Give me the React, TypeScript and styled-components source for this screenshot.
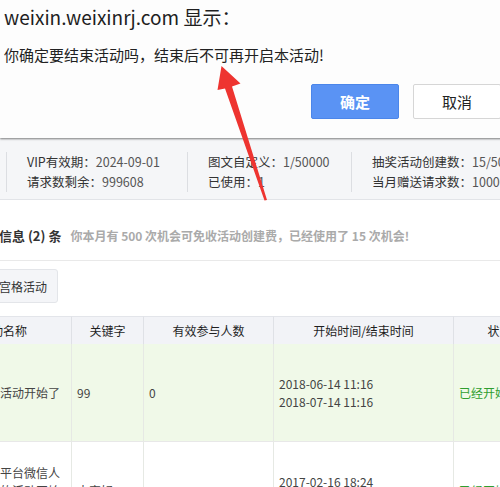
import React from 'react';
import styled, { createGlobalStyle } from 'styled-components';

const GlobalStyle = createGlobalStyle`
  html, body {
    margin: 0;
    padding: 0;
    background: #fff;
  }
  body {
    font-family: 'Noto Sans CJK SC', 'Noto Sans', sans-serif;
    color: #333;
    overflow: hidden;
  }
`;

const Screen = styled.div`
  position: relative;
  width: 500px;
  height: 487px;
  overflow: hidden;
  background: #fff;
`;

/* browser alert sheet */
const Alert = styled.div`
  position: relative;
  z-index: 2;
  width: 525px;
  height: 138px;
  box-sizing: border-box;
  padding: 3px 24px 0 4px;
  background: #fdfdfd;
  box-shadow: 0 1px 2px rgba(0, 0, 0, 0.5);
`;

const AlertTitle = styled.div`
  font-size: 19px;
  line-height: 28px;
  color: #1f1f1f;
  white-space: nowrap;
`;

const AlertMessage = styled.div`
  margin-top: 13px;
  font-size: 15px;
  line-height: 22px;
  color: #222;
  white-space: nowrap;
`;

const AlertActions = styled.div`
  display: flex;
  justify-content: flex-end;
  gap: 14px;
  margin-top: 18px;
`;

const AlertButton = styled.button<{ $primary?: boolean }>`
  width: 88px;
  height: 35px;
  box-sizing: border-box;
  border-radius: 2px;
  font-family: inherit;
  font-size: 15px;
  font-weight: ${({ $primary }) => ($primary ? 700 : 400)};
  color: ${({ $primary }) => ($primary ? '#fff' : '#222')};
  background: ${({ $primary }) => ($primary ? '#5a93f4' : '#fff')};
  border: 1px solid ${({ $primary }) => ($primary ? '#4b86ea' : '#d6d6d6')};
`;

const Content = styled.div`
  margin-left: -65px;
  width: 610px;
`;

const StatsBar = styled.div`
  display: flex;
  height: 62px;
  box-sizing: border-box;
  padding: 14px 0 7px;
  background: #f5f6f8;
  border-bottom: 1px solid #e2e4e8;
`;

const StatItem = styled.div<{ $width?: number }>`
  flex: ${({ $width }) => ($width ? `0 0 ${$width}px` : '1 1 auto')};
  box-sizing: border-box;
  padding-left: 20px;
  border-right: ${({ $width }) => ($width ? '1px solid #dcdee2' : 'none')};
  font-size: 12.5px;
  line-height: 20px;
  white-space: nowrap;
  overflow: hidden;
`;

const StatLabel = styled.span`
  color: #333;
`;

const StatValue = styled.span`
  color: #555;
`;

const SectionHead = styled.div`
  padding: 24px 0 14px 38px;
  border-bottom: 1px solid #e9e9e9;
  line-height: 20px;
  white-space: nowrap;
`;

const SectionTitle = styled.span`
  font-size: 13px;
  font-weight: 700;
  color: #333;
`;

const SectionNote = styled.span`
  margin-left: 9px;
  font-size: 12px;
  font-weight: 700;
  color: #aaa;
`;

const Toolbar = styled.div`
  display: flex;
  padding: 8px 0 13px 41px;
`;

const ToolButton = styled.div`
  height: 34px;
  box-sizing: border-box;
  padding: 0 10px;
  display: flex;
  align-items: center;
  font-size: 12px;
  color: #333;
  background: #f4f5f8;
  border: 1px solid #e3e5e9;
  border-radius: 3px;
`;

const Table = styled.div`
  display: grid;
  grid-template-columns: 136px 72px 130px 180px 92px;
`;

const HeadCell = styled.div<{ $first?: boolean }>`
  height: 28px;
  box-sizing: border-box;
  display: flex;
  align-items: center;
  justify-content: center;
  font-size: 12px;
  color: #1f1f1f;
  background: #f2f3f7;
  border-top: 1px solid #e3e5ea;
  border-left: ${({ $first }) => ($first ? 'none' : '1px solid #dfe1e6')};
  white-space: nowrap;
`;

const Cell = styled.div<{ $first?: boolean; $active?: boolean; $status?: boolean }>`
  min-height: 98px;
  box-sizing: border-box;
  display: flex;
  align-items: center;
  padding: 0 5px;
  font-size: 12px;
  line-height: 18px;
  color: ${({ $status }) => ($status ? '#2f9e2f' : '#444')};
  background: ${({ $active }) => ($active ? '#f0f9e8' : '#fff')};
  border-left: ${({ $first }) => ($first ? 'none' : '1px solid #e6e9e4')};
  border-bottom: 1px solid #e8e8e8;
  word-break: break-all;
`;

const Arrow = styled.svg`
  position: absolute;
  left: 0;
  top: 0;
  z-index: 3;
  pointer-events: none;
`;

const stats = [
  { width: 72, rows: [] as string[][] },
  { width: 181, rows: [['VIP有效期：', '2024-09-01'], ['请求数剩余：', '999608']] },
  { width: 164, rows: [['图文自定义：', '1/50000'], ['已使用：', '1']] },
  { width: 0, rows: [['抽奖活动创建数：', '15/50'], ['当月赠送请求数：', '10000']] },
];

const columns = ['活动名称', '关键字', '有效参与人数', '开始时间/结束时间', '状态'];

const activities = [
  {
    name: '九宫格抽奖活动开始了',
    keyword: '99',
    count: '0',
    start: '2018-06-14 11:16',
    end: '2018-07-14 11:16',
    status: '已经开始了',
  },
  {
    name: '本次第三方平台微信人气投票评选的活动开始了',
    keyword: '大家好',
    count: '24',
    start: '2017-02-16 18:24',
    end: '2017-03-16 18:24',
    status: '已经开始了',
  },
];

const App = () => (
  <Screen>
    <GlobalStyle />
    <Alert>
      <AlertTitle>weixin.weixinrj.com 显示：</AlertTitle>
      <AlertMessage>你确定要结束活动吗，结束后不可再开启本活动!</AlertMessage>
      <AlertActions>
        <AlertButton $primary>确定</AlertButton>
        <AlertButton>取消</AlertButton>
      </AlertActions>
    </Alert>

    <Content>
      <StatsBar>
        {stats.map((item, index) => (
          <StatItem key={index} $width={item.width || undefined}>
            {item.rows.map(([label, value], i) => (
              <div key={i}>
                <StatLabel>{label}</StatLabel>
                <StatValue>{value}</StatValue>
              </div>
            ))}
          </StatItem>
        ))}
      </StatsBar>

      <SectionHead>
        <SectionTitle>活动信息 (2) 条</SectionTitle>
        <SectionNote>
          你本月有 500 次机会可免收活动创建费，已经使用了 15 次机会!
        </SectionNote>
      </SectionHead>

      <Toolbar>
        <ToolButton>九宫格活动</ToolButton>
      </Toolbar>

      <Table>
        {columns.map((title, index) => (
          <HeadCell key={title} $first={index === 0}>
            {title}
          </HeadCell>
        ))}
        {activities.map((row, index) => {
          const active = index === 0;
          return (
            <React.Fragment key={index}>
              <Cell $first $active={active}>{row.name}</Cell>
              <Cell $active={active}>{row.keyword}</Cell>
              <Cell $active={active}>{row.count}</Cell>
              <Cell $active={active}>
                {row.start}
                <br />
                {row.end}
              </Cell>
              <Cell $active={active} $status>
                {row.status}
              </Cell>
            </React.Fragment>
          );
        })}
      </Table>
    </Content>

    <Arrow width="500" height="487" viewBox="0 0 500 487">
      <polygon
        points="221.5,66 240.5,83.5 232,86.5 267,200 264.5,200.5 225,88.5 217.5,90"
        fill="#ee3430"
      />
    </Arrow>
  </Screen>
);

export default App;
